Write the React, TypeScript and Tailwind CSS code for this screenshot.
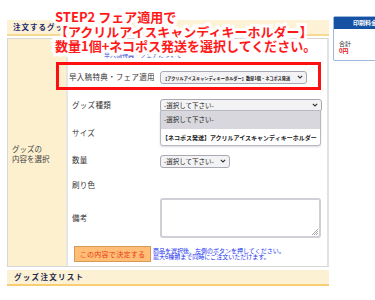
import React from "react";

function Chevron() {
  return (
    <svg width="6" height="4" viewBox="0 0 6 4" className="shrink-0">
      <path d="M0.8 0.8 L3 3 L5.2 0.8" fill="none" stroke="#333" strokeWidth="1.1" />
    </svg>
  );
}

function Select({ text, w, small }: { text: string; w: string; small?: boolean }) {
  return (
    <div
      className={`${w} relative h-[13px] rounded-[3px] border border-[#a9a9b2] bg-[#f3f3f5] flex items-center justify-between pl-[3px] pr-[3px] overflow-hidden`}
    >
      {small ? (
        <span className="absolute left-[2px] top-[2px] origin-top-left scale-50 text-[8.4px] font-bold whitespace-nowrap leading-[14px] text-[#222]">
          {text}
        </span>
      ) : (
        <span className="text-[6.5px] whitespace-nowrap leading-none text-[#222]">{text}</span>
      )}
      <span className="ml-auto">
        <Chevron />
      </span>
    </div>
  );
}

export default function App() {
  return (
    <div className="relative w-[375px] h-[300px] overflow-hidden bg-white font-['Noto_Sans_CJK_JP',sans-serif] text-[#333]">
      <div className="flex pt-[16px]">
        {/* main column */}
        <div className="ml-[7px] w-[322px] shrink-0 pt-[4px]">
          <div className="h-[16px] bg-[#fdf2d6] border-b-2 border-[#f7d993] pl-[6px] text-[7.5px] font-bold text-[#1d2a6e] tracking-[1px] leading-[14px]">
            注文するグッズ
          </div>

          <div className="mt-[2px] flex h-[229px] border border-[#d6d6d6] border-r-2 border-r-[#e2e2e2]">
            <div className="w-[58px] shrink-0 bg-[#fdf0cf] flex items-center pl-[4px] pt-[3px] text-[7.5px] leading-[10px] text-[#444]">
              グッズの
              <br />
              内容を選択
            </div>

            <div className="flex-1 border-l-2 border-[#e6e6e6] flex flex-col">
              <div className="h-[24px] pl-[36px] pt-[13px] text-[6px] text-[#3344cc] leading-none">
                早入稿特典・フェアについて
              </div>

              <div className="h-[28px] flex items-center">
                <span className="w-[92px] text-[7.5px] pl-[1px] tracking-[0.3px]">早入稿特典・フェア適用</span>
                <Select text="【アクリルアイスキャンディキーホルダー】数量1個・ネコポス発送" w="w-[147px]" small />
              </div>

              <div className="h-[28px] flex items-center">
                <span className="w-[92px] text-[7.5px] pl-[4px] tracking-[0.3px]">グッズ種類</span>
                <Select text="-選択して下さい-" w="w-[162px]" />
              </div>

              <div className="h-[28px] flex items-center">
                <span className="w-[92px] text-[7.5px] pl-[4px] tracking-[0.3px]">サイズ</span>
              </div>

              <div className="h-[28px] flex items-center">
                <span className="w-[92px] text-[7.5px] pl-[4px] tracking-[0.3px] -mt-[3px]">数量</span>
                <Select text="-選択して下さい-" w="w-[70px]" />
              </div>

              <div className="h-[20px] flex items-center">
                <span className="w-[92px] text-[7.5px] pl-[4px] tracking-[0.3px]">刷り色</span>
              </div>

              <div className="h-[46px] flex items-center">
                <span className="w-[92px] text-[7.5px] pl-[4px] tracking-[0.3px]">備考</span>
                <div className="relative w-[161px] h-[40px] rounded-[3px] border-2 border-[#cfcfd6] bg-white">
                  <svg width="6" height="6" viewBox="0 0 6 6" className="absolute right-[1px] bottom-[1px]">
                    <path d="M6 0 L0 6 M6 2 L2 6 M6 4 L4 6" stroke="#888" strokeWidth="0.7" />
                  </svg>
                </div>
              </div>

              <div className="flex items-center pl-[6px] pt-[5px]">
                <button className="w-[77px] h-[16px] bg-[#ffbd75] border border-[#d69a58] text-[#e63c1a] text-[7px] leading-none tracking-[0.3px]">
                  この内容で決定する
                </button>
                <div className="ml-[2px] text-[6px] leading-[6.5px] text-[#2233ee]">
                  商品を選択後、左側のボタンを押してください。
                  <br />
                  最大6種類まで同時にご注文いただけます。
                </div>
              </div>
            </div>
          </div>

          <div className="mt-[3px] h-[16px] bg-[#fdf1d4] border-b-2 border-[#f8cd73] pl-[7px] text-[7.5px] font-bold text-[#1d2a4e] tracking-[1.3px] leading-[14px]">
            グッズ注文リスト
          </div>
        </div>

        {/* right panel */}
        <div className="ml-[4px] w-[50px] h-[45px] shrink-0 rounded-[2px] border border-[#9cb8df] bg-white">
          <div className="h-[12px] bg-[#1652a3] text-white text-[6px] font-bold leading-[12px] pl-[19px] whitespace-nowrap">
            印刷料金
          </div>
          <div className="pl-[5px] pt-[11px] text-[6px] leading-[7px] text-[#333]">
            合計
            <div className="text-[#e52020] font-bold">0円</div>
          </div>
        </div>
      </div>

      {/* dropdown list opened under グッズ種類 */}
      <div className="absolute left-[160px] top-[110px] w-[161px] h-[36px] rounded-b-[3px] border border-[#b9b9c2] bg-white shadow-[0_1px_2px_rgba(0,0,0,0.15)]">
        <div className="h-[18px] bg-[#d7d7dd] flex items-center pl-[3px] text-[6.5px] text-[#222]">-選択して下さい-</div>
        <div className="h-[17px] flex items-center pl-[1px] text-[6px] font-bold text-[#222] whitespace-nowrap">
          【ネコポス発送】アクリルアイスキャンディキーホルダー
        </div>
      </div>

      {/* highlight box */}
      <div className="absolute left-[56px] top-[62px] w-[265px] h-[28px] border-[3px] border-[#ff1010]" />

      {/* instruction overlay */}
      <div className="absolute left-[55px] top-[10px] text-[13px] font-bold leading-[14.5px] text-[#ff1a1a] whitespace-nowrap [paint-order:stroke_fill] [-webkit-text-stroke:6px_white]">
        STEP2 フェア適用で
        <br />
        【アクリルアイスキャンディキーホルダー】
        <br />
        数量1個+ネコポス発送を選択してください。
      </div>
    </div>
  );
}
